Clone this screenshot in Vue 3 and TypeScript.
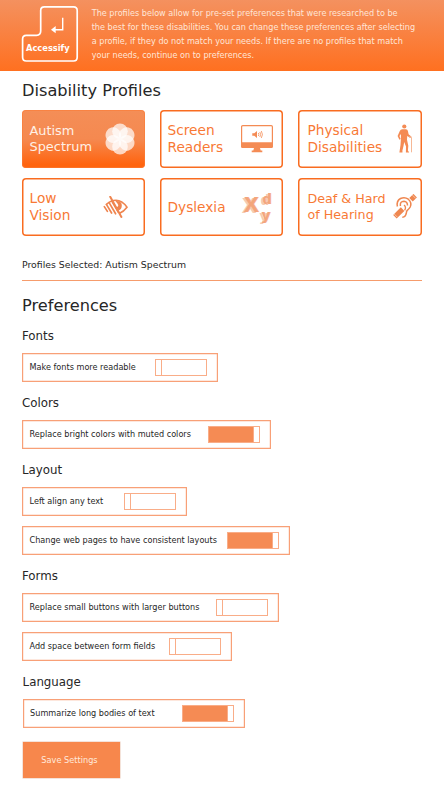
<script setup lang="ts">
import { ref } from 'vue'

interface Profile {
  id: string
  lines: string[]
}

interface Preference {
  label: string
  width: number
  on: boolean
}

interface Section {
  title: string
  items: Preference[]
}

const profiles: Profile[] = [
  { id: 'autism', lines: ['Autism', 'Spectrum'] },
  { id: 'screen', lines: ['Screen', 'Readers'] },
  { id: 'physical', lines: ['Physical', 'Disabilities'] },
  { id: 'vision', lines: ['Low', 'Vision'] },
  { id: 'dyslexia', lines: ['Dyslexia'] },
  { id: 'hearing', lines: ['Deaf & Hard', 'of Hearing'] },
]

const selected = ref('autism')
const petals = [0, 60, 120, 180, 240, 300]

const sections = ref<Section[]>([
  { title: 'Fonts', items: [{ label: 'Make fonts more readable', width: 196, on: false }] },
  { title: 'Colors', items: [{ label: 'Replace bright colors with muted colors', width: 249, on: true }] },
  {
    title: 'Layout',
    items: [
      { label: 'Left align any text', width: 165, on: false },
      { label: 'Change web pages to have consistent layouts', width: 268, on: true },
    ],
  },
  {
    title: 'Forms',
    items: [
      { label: 'Replace small buttons with larger buttons', width: 256.5, on: false },
      { label: 'Add space between form fields', width: 209.5, on: false },
    ],
  },
  { title: 'Language', items: [{ label: 'Summarize long bodies of text', width: 222, on: true }] },
])
</script>

<template>
  <div class="page">
    <header class="header">
      <div class="logo">
        <svg class="logo-shape" viewBox="0 0 58 58">
          <path d="M24 1.8H52.5Q56.2 1.8 56.2 5.5V52.2Q56.2 56 52.5 56H5.3Q1.6 56 1.6 52.2V34Q1.6 30.3 5.3 30.3H15.5Q19.7 30.3 19.7 26V5.5Q19.7 1.8 23.4 1.8Z" fill="none" stroke="#fff" stroke-width="1.7" />
          <path d="M41.7 12.8V24.8H32" fill="none" stroke="#fff" stroke-width="1.4" />
          <path d="M30 24.8L34.7 21.1V28.3Z" fill="#fff" />
        </svg>
        <span class="logo-name">Accessify</span>
      </div>
      <p class="intro">
        The profiles below allow for pre-set preferences that were researched to be<br />
        the best for these disabilities. You can change these preferences after selecting<br />
        a profile, if they do not match your needs. If there are no profiles that match<br />
        your needs, continue on to preferences.
      </p>
    </header>

    <main class="content">
      <h1 class="title">Disability Profiles</h1>
      <div class="cards">
        <button
          v-for="p in profiles"
          :key="p.id"
          class="card"
          :class="[p.id, { active: selected === p.id }]"
          @click="selected = p.id"
        >
          <span class="card-text"><span v-for="l in p.lines" :key="l">{{ l }}</span></span>

          <svg v-if="p.id === 'autism'" class="icon" viewBox="0 0 32 32">
            <circle v-for="a in petals" :key="a" cx="16" cy="8.3" r="7.8" fill="#fff" fill-opacity=".7" :transform="`rotate(${a} 16 16)`" />
          </svg>

          <svg v-else-if="p.id === 'screen'" class="icon" viewBox="0 0 32 28">
            <path d="M1.8 .6H30.2Q31.4 .6 31.4 1.8V21.3Q31.4 22.5 30.2 22.5H1.8Q.6 22.5 .6 21.3V1.8Q.6 .6 1.8 .6Z" fill="#fff" stroke="#f48b54" stroke-width="1.2" />
            <path d="M0 17.2H32V21.3Q32 23 30.2 23H1.8Q0 23 0 21.3Z" fill="#f48b54" />
            <path d="M13 23H19L19.7 25.5H21.3V27.3H10.7V25.5H12.3Z" fill="#f48b54" />
            <path d="M11.3 8.3H13.3L16 6V13L13.3 10.8H11.3Z" fill="#f48b54" />
            <path d="M17.3 8Q18.4 9.5 17.3 11M18.8 7Q20.5 9.5 18.8 12M20.3 6Q22.6 9.5 20.3 13" fill="none" stroke="#f48b54" stroke-width=".8" />
          </svg>

          <svg v-else-if="p.id === 'physical'" class="icon" viewBox="0 0 16 30">
            <circle cx="7.3" cy="2.5" r="2.1" fill="#f48b54" />
            <path d="M5.2 5.2H8.9Q10.6 5.4 10.9 7L11.6 10.3L14.2 12.5L13.5 14L10.2 12L10 15.8L11.3 21.8L10.9 26.6L12.2 28.5H8.9L9 22.5L7.2 18L6.5 22L5.4 26.6L5.5 28.5H2.4L3.5 21L3.9 15V10L2.5 12L3.6 15L2.4 15.8L.6 12L2.8 7Q3.6 5.3 5.2 5.2Z" fill="#f48b54" />
            <path d="M12.6 13.6V12.5Q14.5 11.6 14.5 14V28.3" fill="none" stroke="#f5b08a" stroke-width=".9" />
          </svg>

          <svg v-else-if="p.id === 'vision'" class="icon" viewBox="0 0 26 22">
            <path d="M3 8.8Q7.5 4.3 13 4.3Q19 4.3 24 11.2Q20.5 15.8 16.6 17.2" fill="none" stroke="#ef854f" stroke-width="1.6" />
            <path d="M1.3 10.6L4.4 15.4M3.4 8.4L8.6 17M6.1 6.6L12.6 17.8M8.8 5L15.4 16.2" fill="none" stroke="#ef854f" stroke-width="1.7" stroke-linecap="round" />
            <path d="M12.4 5Q18.8 4.3 18.8 9.5Q18.8 13.4 15.6 14.6L13.3 11.2Q16.4 10.4 14.6 7.7Z" fill="#ef854f" />
            <path d="M7.2 .8L18.4 21" fill="none" stroke="#ef854f" stroke-width="2" stroke-linecap="round" />
          </svg>

          <span v-else-if="p.id === 'dyslexia'" class="letters">
            <span class="letter x">X</span><span class="stack"><span class="letter d">d</span><span class="letter y">y</span></span>
          </span>

          <svg v-else class="icon" viewBox="0 0 24 25">
            <path d="M4.4 12.5Q3.2 7 7.5 4.5Q11.7 2.5 15.3 5.2Q19.2 8.6 17.2 13Q16.3 14.8 14.3 16.3Q13.5 17.2 13.3 19.2Q12.6 23.3 9.3 23.2M7.4 12Q6.8 7.2 11 7.2Q14.5 7.4 14.5 11.5" fill="none" stroke="#ef8750" stroke-width="1.5" />
            <path d="M11 11Q13.6 13 11.6 16.4" fill="none" stroke="#ef8750" stroke-width="1.3" />
            <path d="M1.9 22.7L9.6 15.1M18 5.7L22.2 1.7" fill="none" stroke="#ef8750" stroke-width="5" />
            <path d="M1.1 19.9L4.3 23.1M19.4 1.1L22.8 4.5" stroke="#fff" stroke-width=".5" />
          </svg>
        </button>
      </div>

      <p class="chosen">Profiles Selected: Autism Spectrum</p>

      <h1 class="title prefs">Preferences</h1>
      <section v-for="s in sections" :key="s.title" class="section">
        <h2 class="subtitle">{{ s.title }}</h2>
        <div class="rows">
          <div v-for="i in s.items" :key="i.label" class="row" :style="{ width: i.width + 'px' }">
            <span class="label">{{ i.label }}</span>
            <button class="switch" :class="{ on: i.on }" :aria-label="i.label" @click="i.on = !i.on"><span class="knob"></span></button>
          </div>
        </div>
      </section>
      <button class="save">Save Settings</button>
    </main>
  </div>
</template>

<style>
body {
  background: #fff;
}
</style>

<style scoped>
.page {
  width: 444px;
  height: 800px;
  overflow: hidden;
  font-family: 'DejaVu Sans', Verdana, sans-serif;
  color: #262626;
}
.page * {
  box-sizing: border-box;
}
button {
  font: inherit;
  border: 0;
  padding: 0;
  margin: 0;
  background: none;
  text-align: left;
}
.header {
  height: 71px;
  display: flex;
  padding: 5px 0 0 21px;
  background: linear-gradient(#f4915f, #ff7020);
}
.logo {
  position: relative;
  width: 58px;
  height: 58px;
}
.logo-shape {
  display: block;
  width: 58px;
  height: 58px;
}
.logo-name {
  position: absolute;
  left: 5px;
  top: 38px;
  font-size: 8.3px;
  line-height: 10px;
  font-weight: 700;
  color: #fff;
}
.intro {
  margin: 2px 0 0 12.7px;
  font-size: 8.12px;
  line-height: 13.85px;
  color: #ffe6d8;
  white-space: nowrap;
}
.content {
  padding: 10px 22px 0;
}
.title {
  margin: 0;
  font-size: 16.2px;
  font-weight: 400;
  line-height: 20px;
}
.cards {
  margin-top: 9px;
  display: grid;
  grid-template-columns: 123px 123px 123.5px;
  grid-auto-rows: 57.5px;
  gap: 10.5px 15px;
}
.card {
  display: flex;
  align-items: center;
  justify-content: space-between;
  padding-left: 7.5px;
  border-radius: 4px;
  box-shadow: inset 0 0 0 1.5px #f96c20;
  color: #f87935;
  font-size: 13.7px;
  line-height: 16.5px;
}
.card.active {
  color: #fff0e6;
  background: linear-gradient(#f48e57 0%, #f58950 50%, #ff640f 94%);
  box-shadow: inset 0 0 0 1px #fb7b3599;
}
.card-text {
  display: flex;
  flex-direction: column;
  white-space: nowrap;
}
.autism {
  font-size: 12.9px;
  line-height: 15.5px;
}
.physical,
.hearing {
  padding-left: 9.5px;
}
.icon {
  display: block;
  flex: none;
}
.autism .icon {
  width: 32px;
  height: 32px;
  margin-right: 9px;
}
.screen .icon {
  width: 32px;
  height: 28px;
  margin-right: 10px;
}
.physical .icon {
  width: 16px;
  height: 30px;
  margin-right: 9px;
}
.vision .icon {
  width: 26px;
  height: 22px;
  margin-right: 16.5px;
}
.hearing .icon {
  width: 24px;
  height: 25px;
  margin-right: 5px;
}
.hearing {
  font-size: 12.7px;
  line-height: 15.5px;
}
.letters {
  display: flex;
  gap: 3px;
  height: 30px;
  margin-right: 12px;
  font-family: 'Liberation Sans', Arial, sans-serif;
  font-weight: 700;
  color: #f3a57c;
  text-shadow: -2px 1px 0 #f7c9b0, 1px 0 0 #f6b391;
}
.stack {
  display: flex;
  flex-direction: column;
}
.letter {
  display: block;
}
.letter.x {
  font-size: 22px;
  line-height: 25px;
}
.letter.d {
  padding-left: 1px;
  font-size: 14px;
  line-height: 14px;
}
.letter.y {
  font-size: 15px;
  line-height: 17px;
}
.chosen {
  margin: 22px 0 0;
  height: 23px;
  border-bottom: 1px solid #f69c6c;
  font-size: 9.33px;
  line-height: 14px;
}
.prefs {
  margin-top: 15px;
}
.section {
  margin-top: 12px;
}
.section + .section {
  margin-top: 13px;
}
.subtitle {
  margin: 0;
  font-size: 11.8px;
  line-height: 16px;
  font-weight: 400;
}
.rows {
  margin-top: 9px;
  display: grid;
  gap: 10px;
}
.row {
  height: 29px;
  padding: 0 11px 0 7.5px;
  display: flex;
  align-items: center;
  justify-content: space-between;
  box-shadow: inset 0 0 0 1.2px #f8a077;
}
.section:last-of-type {
  padding-left: 0.6px;
}
.label {
  font-size: 8.13px;
  white-space: nowrap;
}
.switch {
  width: 52px;
  height: 17px;
  display: flex;
  box-shadow: inset 0 0 0 1px #f9ad88;
}
.knob {
  width: 7px;
  height: 17px;
  box-shadow: inset 0 0 0 1px #f9ad88;
}
.switch.on {
  justify-content: flex-end;
  background: #f58b54;
}
.switch.on .knob {
  background: #fff;
}
.save {
  display: block;
  margin: 14px 0 0 1px;
  padding-right: 4px;
  width: 97px;
  height: 36px;
  text-align: center;
  background: #f7874c;
  box-shadow: 0 0 0 .5px #e9c8b6;
  color: #ffeadd;
  font-size: 8.2px;
}
</style>
